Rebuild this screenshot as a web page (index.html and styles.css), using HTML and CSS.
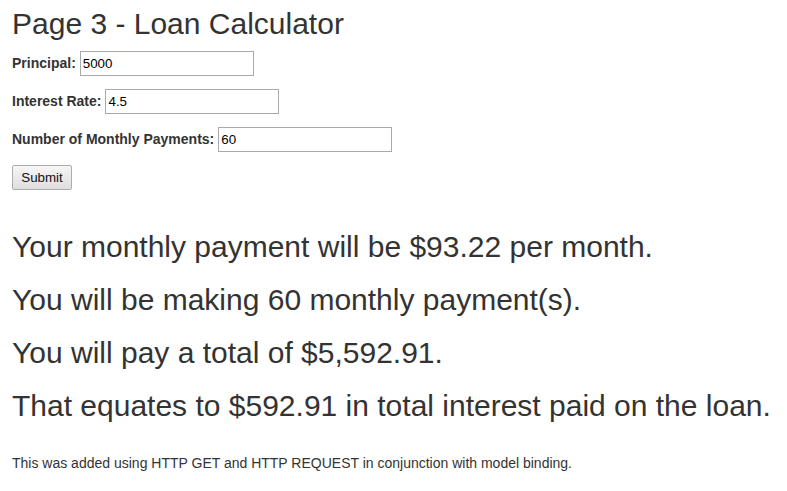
FILE: index.html
```html
<!DOCTYPE html>
<html lang="en">
<head>
<meta charset="utf-8">
<title>Page 3 - Loan Calculator</title>
<link rel="stylesheet" href="styles.css">
</head>
<body>
<div class="page">
  <h2 class="title">Page 3 - Loan Calculator</h2>
  <form class="calc-form">
    <div class="field">
      <label for="principal">Principal:</label>
      <input id="principal" class="text-input" type="text" value="5000">
    </div>
    <div class="field">
      <label for="rate">Interest Rate:</label>
      <input id="rate" class="text-input" type="text" value="4.5">
    </div>
    <div class="field">
      <label for="payments">Number of Monthly Payments:</label>
      <input id="payments" class="text-input" type="text" value="60">
    </div>
    <div class="field">
      <button type="button" class="submit-btn">Submit</button>
    </div>
  </form>
  <div class="results">
    <h2 class="result">Your monthly payment will be $93.22 per month.</h2>
    <h2 class="result">You will be making 60 monthly payment(s).</h2>
    <h2 class="result">You will pay a total of $5,592.91.</h2>
    <h2 class="result">That equates to $592.91 in total interest paid on the loan.</h2>
  </div>
  <p class="note">This was added using HTTP GET and HTTP REQUEST in conjunction with model binding.</p>
</div>
</body>
</html>
```
FILE: styles.css
```css
html, body {
  margin: 0;
  padding: 0;
  background: #ffffff;
}

body {
  font-family: "Liberation Sans", Arial, Helvetica, sans-serif;
  font-size: 14px;
  line-height: 20px;
  color: #333333;
}

.page {
  padding: 7px 12px 0 12px;
}

.title,
.result {
  font-size: 30px;
  font-weight: 500;
  line-height: 33px;
  margin: 0;
  white-space: nowrap;
}

.calc-form {
  margin: 11px 0 0 0;
}

.field {
  display: flex;
  align-items: baseline;
  gap: 4px;
  height: 25px;
  margin-bottom: 13px;
}

.field:last-child {
  margin-bottom: 0;
}

.field label {
  font-weight: bold;
  font-size: 14px;
  line-height: 20px;
}

.text-input {
  box-sizing: border-box;
  width: 174px;
  height: 25px;
  margin: 0;
  padding: 1px 2px;
  border: 1px solid #a9a9a9;
  border-radius: 0;
  font-family: "Liberation Sans", Arial, sans-serif;
  font-size: 13.333px;
  color: #000000;
  background: #ffffff;
}

.submit-btn {
  box-sizing: border-box;
  width: 60px;
  height: 25px;
  margin: 0;
  padding: 0;
  border: 1px solid #adadad;
  border-radius: 2px;
  background: linear-gradient(#f6f6f6, #dedede);
  font-family: "Liberation Sans", Arial, sans-serif;
  font-size: 13.333px;
  color: #111111;
}

.results {
  margin-top: 40px;
  display: flex;
  flex-direction: column;
  gap: 20px;
}

.note {
  margin: 31px 0 0 0;
  font-size: 14px;
  line-height: 20px;
  white-space: nowrap;
}
```
